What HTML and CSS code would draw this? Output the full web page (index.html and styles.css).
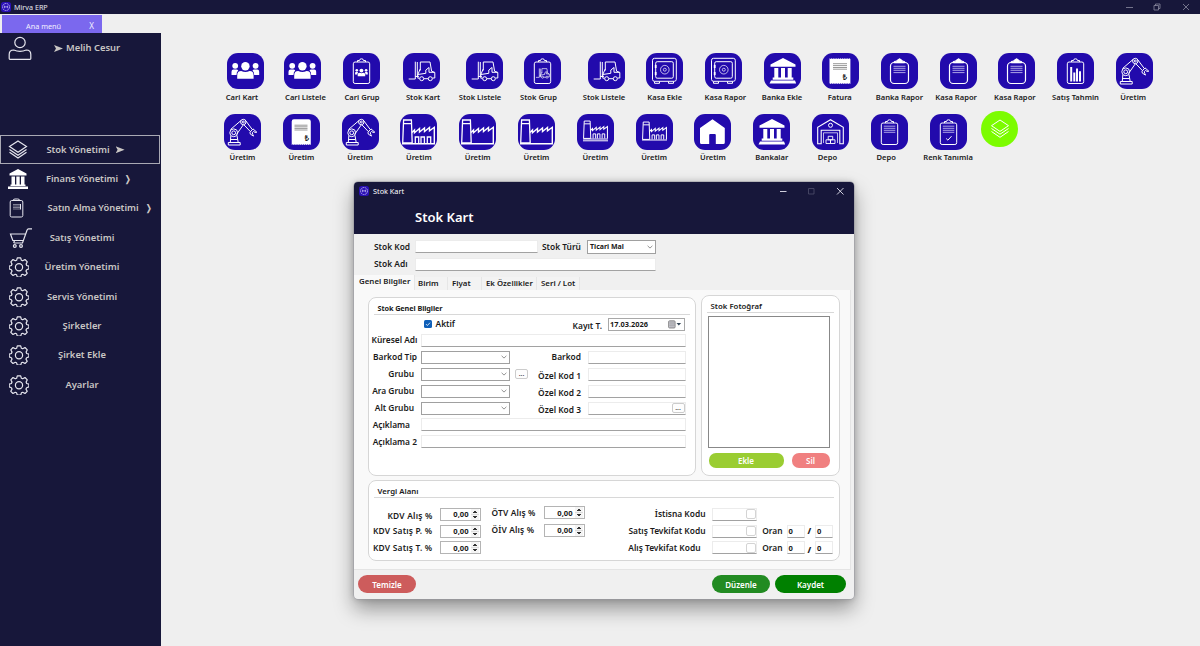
FILE: index.html
```html
<!DOCTYPE html>
<html lang="tr">
<head>
  <meta charset="utf-8">
  <title>Mirva ERP</title>
  <link rel="stylesheet" href="styles.css">
</head>
<body>
  <!-- icon library -->
  <svg class="symbols">
    <symbol id="logo" viewBox="0 0 10 10">
      <rect width="10" height="10" rx="2.5" fill="#2a10b4"/>
      <circle cx="5" cy="5" r="3.5" fill="none" stroke="#b9b0f0" stroke-width=".9" stroke-dasharray="1.8 .6"/>
      <path d="M3.4 6.2V4l1.6 1.3L6.6 4v2.2" fill="none" stroke="#d5d0f8" stroke-width=".7"/>
    </symbol>
    <symbol id="people" viewBox="0 0 37 36">
      <g fill="#fff" stroke="none">
        <circle cx="8.2" cy="12.8" r="2.9"/><circle cx="28.6" cy="12.8" r="2.9"/>
        <path d="M4.500 22v-3.300q0-2.200 2-2.200h3q1.200 0 1.700 1-1.700 1.300-1.700 4.500z"/>
        <path d="M32.200 22v-3.300q0-2.200-2-2.200h-3q-1.200 0-1.700 1 1.700 1.300 1.700 4.500z"/>
        <circle cx="18.400" cy="13.200" r="4.200"/>
        <path d="M10.200 25.700v-3.200q0-4.400 4-4.400 4.200 1.800 8.400 0 4 0 4 4.400v3.200z"/>
      </g>
    </symbol>
    <symbol id="board" viewBox="0 0 37 36">
      <rect x="10.300" y="9" width="16.400" height="21.500" rx="1.800"/>
      <path d="M14.500 9v-1.500h2q0-1.700 2-1.700t2 1.700h2V9"/>
    </symbol>
    <symbol id="board-people" viewBox="0 0 37 36">
      <use href="#board"/>
      <svg x="10" y="11.500" width="17" height="16.500"><use href="#people"/></svg>
    </symbol>
    <symbol id="forklift" viewBox="0 0 37 36">
      <path d="M5.700 26h6.600V8.700M14.300 9v14.500M12.300 23.500h3.500M17.300 17.500V9H27l1.600 9.200 3.200 1.300v5.500h-2.300M17.200 16l-2.400 5.500v3.700h1.700M21 25.700h4.200M14.800 21.500l8-1.200V17l3.200-2.500v4.800h5.500"/>
      <circle cx="18.700" cy="25.700" r="2"/><circle cx="27.300" cy="25.700" r="2"/>
    </symbol>
    <symbol id="board-forklift" viewBox="0 0 37 36">
      <use href="#board"/>
      <svg x="9" y="11" width="19" height="18.500" stroke-width="1.300"><use href="#forklift"/></svg>
    </symbol>
    <symbol id="safe" viewBox="0 0 37 36">
      <rect x="6.500" y="5.300" width="23.800" height="23" rx="2"/>
      <rect x="9.700" y="8.700" width="17.600" height="16.500" rx="1.500"/>
      <circle cx="18.800" cy="16.700" r="4.300" stroke-width=".7"/><circle cx="18.800" cy="16.700" r="1.500" stroke-width=".7"/>
      <path d="M9.700 12v3M9.700 19v3" stroke-width="1.800"/>
      <path d="M8.500 28.500v1.800h5v-1.800M22.500 28.500v1.800h5v-1.800"/>
    </symbol>
    <symbol id="bank" viewBox="0 0 37 36">
      <path fill="#fff" stroke="none" d="M19 5l12.500 6.500v2.200h-25v-2.200zM10.300 15h4v9.500h-4zM17 15h4v9.500h-4zM23.700 15h4v9.500h-4zM8.700 24.500h20.600v2.300H8.700zM7 27.600h24l1.200 3H5.500z"/>
    </symbol>
    <symbol id="invoice" viewBox="0 0 37 36">
      <path fill="#fff" stroke="none" d="M7.500 5.200l1.100.8 1.100-.8 1.100.8 1.100-.8 1.100.8 1.100-.8 1.100.8 1.100-.8 1.100.8 1.100-.8 1.100.8 1.100-.8 1.100.8 1.100-.8 1.100.8 1.100-.8 1.100.8 1.100-.8 1.100.8V31l-1.100-.8-1.100.8-1.100-.8-1.100.8-1.100-.8-1.100.8-1.100-.8-1.100.8-1.100-.8-1.100.8-1.100-.8-1.100.8-1.100-.8-1.100.8-1.100-.8-1.100.8-1.100-.8-1.100.8-1.100-.8z"/>
      <path d="M11 10.700h14M11 12.600h14M11 14.500h14M11 16.200h14" stroke="#8c8c8c" stroke-width=".9"/>
    </symbol>
    <symbol id="receipt" viewBox="0 0 37 36">
      <path fill="#fff" stroke="none" d="M8.700 7.500q0-2.200 2.200-2.200h14.700q2.200 0 2.200 2.200V31l-1.060-.8-1.060.8-1.060-.8-1.060.8-1.060-.8-1.060.8-1.060-.8-1.060.8-1.060-.8-1.060.8-1.060-.8-1.060.8-1.060-.8-1.060.8-1.060-.8-1.060.8-1.060-.8-1.060.8z"/>
      <path d="M11.500 11.200h13M11.500 12.800h13M11.500 14.400h13M11.500 16h13" stroke="#999" stroke-width="1"/>
    </symbol>
    <symbol id="report" viewBox="0 0 37 36">
      <rect x="9.500" y="9.500" width="18" height="21" rx="3.600" stroke-width="1.200"/>
      <path fill="#fff" d="M13.200 9.800V8.500q2.800 0 3.200-1.500 2.200-2.500 4.300 0 .4 1.500 3 1.500v1.300z"/>
      <path d="M12.500 13.300h12M12.500 15.300h12M12.500 17.300h12M12.500 19.600h12" stroke-width=".8" stroke="#cfc9f2"/>
    </symbol>
    <symbol id="chart" viewBox="0 0 37 36">
      <use href="#board"/>
      <path d="M14.200 28.500V14M17.300 28.500V19.500M20 28.500V15.500M23 28.500V18.300" stroke-width="2"/>
    </symbol>
    <symbol id="robot" viewBox="0 0 37 36">
      <path d="M4.300 31v-2.500h11.900V31zM6.300 28.500l.5-6.500M14.200 28.500L13 21.500M7 25.500h6.500M6.500 15.500L17 6.500M12.500 20.500l6.700-9.500M21.800 6.800l6.300 8.500M19.800 10.700l6.500 6.800M26 18.200l3-3.300 3.800 3.300-1.800.2-1.500-1-1.200 1.300.5 1.800.7 1.600-3.200-2z"/>
      <circle cx="9.700" cy="18.800" r="3.900"/><circle cx="9.700" cy="18.800" r="1.900"/>
      <circle cx="19.300" cy="8" r="2.700"/><circle cx="19.300" cy="8" r="1"/>
    </symbol>
    <symbol id="factory-plain" viewBox="0 0 37 36">
      <path d="M3.600 6h7.800l.8 23H2.700zM3.600 9.700h7.900" stroke-width="1.300"/>
      <path d="M12 18.500l2.500-2.500v2.700l5-4.200v3.500l5-4v3.500l5-4v3.300l4.800-3.500V29" stroke-width="1.400"/>
      <path d="M2 29.800h33" stroke-width="1.600"/>
    </symbol>
    <symbol id="factory" viewBox="0 0 37 36">
      <use href="#factory-plain"/>
      <path d="M15.300 29v-6h3.400v6M21 29v-6h3.400v6M27.300 29v-6h3.400v6" stroke-width="1.300"/>
    </symbol>
    <symbol id="factory-small" viewBox="0 0 37 36">
      <svg x="4.500" y="2.500" width="28" height="27.200"><use href="#factory"/></svg>
      <path d="M6 26.800h25" stroke-width="1"/>
    </symbol>
    <symbol id="factory-mini" viewBox="0 0 37 36">
      <svg x="4.500" y="3.500" width="28" height="27.200"><use href="#factory"/></svg>
    </symbol>
    <symbol id="house" viewBox="0 0 37 36">
      <path fill="#fff" stroke="none" d="M18.500 5.300L30.800 14v14.500q0 1.500-1.500 1.500h-7.500v-9q0-1-1-1h-4.600q-1 0-1 1v9H7.500Q6 30 6 28.500V14z"/>
    </symbol>
    <symbol id="depot" viewBox="0 0 37 36">
      <path d="M5.700 29.700V13.200l12.800-7.500 12.800 7.500v16.500h-3.500V16.200H9.200v13.500z" stroke-width="1.100"/>
      <path d="M11.500 29V18.800h14V29" stroke-width=".7"/>
      <circle cx="18.500" cy="11.300" r="2"/>
      <path d="M14 29.500v-3.700h4.500v3.700zM18.500 29.500v-3.700H23v3.700zM16.200 25.800v-3.500h4.500v3.500z" stroke-width=".9"/>
    </symbol>
    <symbol id="list" viewBox="0 0 37 36">
      <use href="#board"/>
      <path d="M12.800 12.200h11.500M12.800 14.300h11.500M12.800 16.300h11.500M12.800 18.300h11.500" stroke-width=".8" stroke="#cfc9f2"/>
    </symbol>
    <symbol id="list-check" viewBox="0 0 37 36">
      <use href="#list"/>
      <path d="M16.200 24.500l1.700 1.700 3.600-4"/>
    </symbol>
    <symbol id="layers" viewBox="0 0 37 36">
      <path d="M19 9l8.500 5.700-8.500 5.700-8.500-5.700zM10.500 17.500l8.500 5.700 8.500-5.700M10.500 20.500l8.500 5.800 8.500-5.800"/>
    </symbol>
    <symbol id="gear" viewBox="0 0 20 20">
      <path d="M8.300.8h3.400l.7 2.500 1.300.5 2.300-1.300 2.300 2.300-1.200 2.300.6 1.400 2.200.6v2.800l-2.300.8-.6 1.400 1.200 2.200-2.200 2.200-2.300-1.200-1.300.5-.7 2.400H8.300l-.7-2.400-1.300-.5L4 18.500 1.800 16.300 3 14.100l-.6-1.400L.2 11.900V9.100l2.200-.6L3 7.100 1.800 4.800 4 2.500l2.300 1.300 1.300-.5z" stroke-linejoin="round"/>
      <circle cx="10" cy="10.300" r="3.600"/>
    </symbol>
    <symbol id="chev" viewBox="0 0 6 4">
      <path d="M.6.800L3 3.100 5.400.8" fill="none" stroke="#777" stroke-width=".8"/>
    </symbol>
  </svg>

  <header class="titlebar">
    <svg class="logo"><use href="#logo"/></svg>
    <span>Mirva ERP</span>
    <svg class="winbtns" viewBox="0 0 70 12">
      <path d="M3 6.500h7M31 4.500h4.500v4.500H31zM32.500 4.500V3h4.500v4.500h-1.500M60 3l6 6M66 3l-6 6"/>
    </svg>
  </header>

  <div class="tabstrip">
    <div class="tab"><span>Ana menü</span><b>X</b></div>
  </div>

  <div class="workspace">
    <nav class="sidebar">
      <div class="user">
        <svg viewBox="0 0 24 24"><circle cx="12" cy="6.500" r="5.200"/><path d="M1.200 22.500v-4q0-4.500 4.500-4.500 6.300 2.600 12.600 0 4.500 0 4.500 4.500v4q0 .8-.8.800H2q-.8 0-.8-.800z"/></svg>
        <span class="arrow"></span><span>Melih Cesur</span>
      </div>
      <a class="item active"><svg viewBox="0 0 20 20"><path d="M10 1l8.500 5.500L10 12.300 1.500 6.500zM1.500 9.500l8.500 5.700 8.500-5.700M1.500 12.300l8.500 5.700 8.500-5.700"/></svg><span>Stok Yönetimi</span><i class="arrow"></i></a>
      <a class="item fin"><svg class="solid" viewBox="0 0 20 20"><path d="M10 0l8.500 4.500v2H1.500v-2zM3.500 7.500H7v8H3.500zM8.300 7.500h3.400v8H8.300zM13 7.500h3.500v8H13zM2.500 15.500h15v1.500h-15zM0 17.500h20V20H0z"/></svg><span>Finans Yönetimi</span><i class="mark">❭</i></a>
      <a class="item wide"><svg class="thin" viewBox="0 0 20 20"><rect x="1.200" y="2.500" width="12.600" height="16.500" rx="1.500"/><path d="M4 2.500q.2-1.500 2-1.500h2.800q1.800 0 2 1.500"/><path d="M4 6.500h7M4 8h7M4 9.500h7M4 11h7" stroke-width=".5"/><path d="M11.500 6v5.500"/></svg><span>Satın Alma Yönetimi</span><i class="mark">❭</i></a>
      <a class="item"><svg class="cart" viewBox="0 0 24 20"><path d="M23 .9h-3.500q-1 0-1.500 1.300L13.500 15H4.700M17 6H1.500l2.300 6.500h10.500M5.500 12.500L4.700 15"/><circle cx="5.800" cy="18" r="1.400"/><circle cx="12" cy="18" r="1.400"/></svg><span>Satış Yönetimi</span></a>
      <a class="item"><svg><use href="#gear"/></svg><span>Üretim Yönetimi</span></a>
      <a class="item"><svg><use href="#gear"/></svg><span>Servis Yönetimi</span></a>
      <a class="item"><svg><use href="#gear"/></svg><span>Şirketler</span></a>
      <a class="item"><svg><use href="#gear"/></svg><span>Şirket Ekle</span></a>
      <a class="item"><svg><use href="#gear"/></svg><span>Ayarlar</span></a>
    </nav>

    <main class="launcher">
      <div class="tiles first">
        <a class="tile l3"><svg><use href="#people"/></svg><span>Cari Kart</span></a>
        <a class="tile r3"><svg><use href="#people"/></svg><span>Cari Listele</span></a>
        <a class="tile r1"><svg><use href="#board-people"/></svg><span>Cari Grup</span></a>
        <a class="tile r2"><svg><use href="#forklift"/></svg><span>Stok Kart</span></a>
        <a class="tile l4"><svg><use href="#forklift"/></svg><span>Stok Listele</span></a>
        <a class="tile l4"><svg><use href="#board-forklift"/></svg><span>Stok Grup</span></a>
        <a class="tile l2"><svg><use href="#forklift"/></svg><span>Stok Listele</span></a>
        <a class="tile"><svg><use href="#safe"/></svg><span>Kasa Ekle</span></a>
        <a class="tile r2"><svg><use href="#safe"/></svg><span>Kasa Rapor</span></a>
        <a class="tile"><svg><use href="#bank"/></svg><span>Banka Ekle</span></a>
        <a class="tile l1"><svg viewBox="0 0 37 36"><use href="#invoice"/><text x="20.500" y="26.500">₺</text></svg><span>Fatura</span></a>
        <a class="tile"><svg><use href="#report"/></svg><span>Banka Rapor</span></a>
        <a class="tile l2"><svg><use href="#report"/></svg><span>Kasa Rapor</span></a>
        <a class="tile l2"><svg><use href="#report"/></svg><span>Kasa Rapor</span></a>
        <a class="tile"><svg><use href="#chart"/></svg><span>Satış Tahmin</span></a>
        <a class="tile l1"><svg><use href="#robot"/></svg><span>Üretim</span></a>
      </div>
      <div class="tiles second">
        <a class="tile"><svg><use href="#robot"/></svg><span>Üretim</span></a>
        <a class="tile"><svg viewBox="0 0 37 36"><use href="#receipt"/><text x="21.500" y="26.500">₺</text></svg><span>Üretim</span></a>
        <a class="tile"><svg><use href="#robot"/></svg><span>Üretim</span></a>
        <a class="tile"><svg><use href="#factory"/></svg><span>Üretim</span></a>
        <a class="tile"><svg><use href="#factory-plain"/></svg><span>Üretim</span></a>
        <a class="tile"><svg><use href="#factory-plain"/></svg><span>Üretim</span></a>
        <a class="tile"><svg><use href="#factory-small"/></svg><span>Üretim</span></a>
        <a class="tile"><svg><use href="#factory-mini"/></svg><span>Üretim</span></a>
        <a class="tile"><svg><use href="#house"/></svg><span>Üretim</span></a>
        <a class="tile"><svg><use href="#bank"/></svg><span>Bankalar</span></a>
        <a class="tile l3"><svg><use href="#depot"/></svg><span>Depo</span></a>
        <a class="tile l3"><svg><use href="#list"/></svg><span>Depo</span></a>
        <a class="tile"><svg><use href="#list-check"/></svg><span>Renk Tanımla</span></a>
        <a class="tile round"><svg><use href="#layers"/></svg></a>
      </div>
    </main>
  </div>

  <section class="window">
    <header class="window-head">
      <div class="window-title">
        <svg class="logo"><use href="#logo"/></svg><span>Stok Kart</span>
        <svg class="controls" viewBox="0 0 70 12"><path d="M3 6.500h6.500M60 3l6.500 6.500M66.500 3L60 9.500"/><path class="off" d="M31.500 3.500h5.500V9h-5.500z"/></svg>
      </div>
      <h1>Stok Kart</h1>
    </header>

    <div class="keys">
      <label>Stok Kod</label><span class="field"></span><label class="kind">Stok Türü</label><span class="select">Ticari Mal<svg><use href="#chev"/></svg></span>
      <label class="name">Stok Adı</label><span class="field span3"></span>
    </div>

    <div class="tabs">
      <span class="on">Genel Bilgiler</span><span class="t-birim">Birim</span><span class="t-fiyat">Fiyat</span><span class="t-ek">Ek Özellikler</span><span class="t-seri">Seri / Lot</span>
    </div>

    <div class="page">
      <div class="upper">
        <fieldset class="general">
          <h2>Stok Genel Bilgiler</h2>
          <div class="top-row">
            <span class="check"><svg viewBox="0 0 8 8"><path d="M2 4.100l1.400 1.400L6 2.700"/></svg></span><label>Aktif</label>
            <label class="date-label">Kayıt T.</label>
            <span class="date">17.03.2026<svg viewBox="0 0 14 9"><rect x=".6" y=".8" width="6.500" height="7.200" rx="1" fill="#c9c9d2" stroke="#777" stroke-width=".8"/><path d="M1 3h6M1 5.200h6M3 1v7M5 1v7" stroke="#888" stroke-width=".4"/><path d="M8.500 3h4.600l-2.300 2.600z" fill="#345"/></svg></span>
          </div>
          <div class="rows">
            <label class="c">Küresel Adı</label><span class="field full"></span>
            <label class="c">Barkod Tip</label><span class="select"><svg><use href="#chev"/></svg></span><span></span><label>Barkod</label><span class="field"></span>
            <label>Grubu</label><span class="select"><svg><use href="#chev"/></svg></span><button class="dots">...</button><label class="low">Özel Kod 1</label><span class="field"></span>
            <label>Ara Grubu</label><span class="select"><svg><use href="#chev"/></svg></span><span></span><label class="low">Özel Kod 2</label><span class="field"></span>
            <label>Alt Grubu</label><span class="select"><svg><use href="#chev"/></svg></span><span></span><label class="low">Özel Kod 3</label><span class="field"><button class="dots">...</button></span>
            <label class="a1">Açıklama</label><span class="field full"></span>
            <label class="c">Açıklama 2</label><span class="field full"></span>
          </div>
        </fieldset>

        <fieldset class="photo">
          <h2>Stok Fotoğraf</h2>
          <div class="frame"></div>
          <div class="photo-btns">
            <button class="add">Ekle</button><button class="del">Sil</button>
          </div>
        </fieldset>
      </div>

      <fieldset class="tax">
        <h2>Vergi Alanı</h2>
        <div class="tax-body">
          <div class="vat">
            <label class="first">KDV Alış %</label><span class="num">0,00</span>
            <label>KDV Satış P. %</label><span class="num">0,00</span>
            <label>KDV Satış T. %</label><span class="num">0,00</span>
          </div>
          <div class="otv">
            <label>ÖTV Alış %</label><span class="num">0,00</span>
            <label>ÖİV Alış %</label><span class="num">0,00</span>
          </div>
          <div class="codes">
            <label>İstisna Kodu</label><span class="field"><i class="pick"></i></span><span></span><span></span><span></span><span></span>
            <label>Satış Tevkifat Kodu</label><span class="field"><i class="pick"></i></span><label class="rate">Oran</label><span class="field">0</span><b>/</b><span class="field">0</span>
            <label class="last">Alış Tevkifat Kodu</label><span class="field"><i class="pick"></i></span><label class="rate">Oran</label><span class="field">0</span><b class="low">/</b><span class="field">0</span>
          </div>
        </div>
      </fieldset>
    </div>

    <footer class="actions">
      <button class="clear">Temizle</button>
      <button class="edit">Düzenle</button>
      <button class="save">Kaydet</button>
    </footer>
  </section>
</body>
</html>
```
FILE: styles.css
```css
* {
  box-sizing: border-box;
}

body {
  margin: 0;
  width: 1200px;
  height: 646px;
  overflow: hidden;
  display: flex;
  flex-direction: column;
  background-color: #efefef;
  font-family: "Noto Sans", "Open Sans", sans-serif;
  font-size: 8px;
  line-height: 10px;
  color: #1a1a1a;
}

.symbols {
  width: 0;
  height: 0;
}

svg {
  display: block;
  flex: none;
}

button {
  font-family: inherit;
  padding: 0;
  border: none;
}

/* main window */
.titlebar {
  height: 14px;
  flex: none;
  display: flex;
  align-items: center;
  padding-left: 1px;
  background-color: #17173a;
  color: #e8e8ee;
  font-size: 7.2px;
}

.logo {
  width: 10px;
  height: 10px;
  margin-right: 4px;
}

.titlebar .logo {
  margin-right: 3px;
}

.winbtns {
  width: 70px;
  height: 12px;
  margin-left: auto;
  margin-right: 7px;
  fill: none;
  stroke: #8c8ca0;
  stroke-width: .8;
}

.tabstrip {
  height: 19px;
  flex: none;
  padding: 1px 0 0 2px;
}

.tab {
  width: 100px;
  height: 18px;
  display: flex;
  align-items: center;
  padding: 3px 8px 0 24px;
  background-color: #7b68ee;
  color: #f2f0ff;
  font-size: 7.3px;
}

.tab b {
  margin-left: auto;
  font-size: 8px;
  font-weight: normal;
}

.workspace {
  flex: 1;
  display: flex;
}

/* sidebar */
.sidebar {
  width: 161px;
  flex: none;
  background-color: #17173a;
  color: #c9c6c4;
  font-size: 9.4px;
  font-weight: 600;
}

.sidebar svg {
  fill: none;
  stroke: #e6e6ee;
  stroke-width: 1.2;
}

.user {
  height: 102px;
  display: flex;
  align-items: flex-start;
  padding: 3px 0 0 8px;
}

.user svg {
  width: 24px;
  height: 24px;
}

.user span {
  margin-top: 7px;
}

.arrow {
  width: 9px;
  height: 7px;
  background-color: #c9c6c4;
  clip-path: polygon(0 0, 100% 50%, 0 100%, 22% 50%);
}

.user .arrow {
  margin: 9px 3px 0 22px;
}

.item {
  position: relative;
  height: 29.4px;
  display: flex;
  align-items: center;
  justify-content: center;
  margin-left: 3px;
}

.item svg {
  position: absolute;
  left: 6px;
  width: 20px;
  height: 20px;
}

.item .cart {
  width: 24px;
}

.item .thin {
  stroke-width: 1;
}

.item .solid {
  left: 5px;
  fill: #fff;
  stroke: none;
}

.item .arrow,
.item .mark {
  margin-left: 6px;
  font-style: normal;
}

.item .mark {
  width: 6px;
}

.item.active {
  width: 160px;
  margin-left: 0;
  padding-left: 11px;
  border: 1px solid #a9a9b4;
}

.item.active svg {
  left: 7px;
}

.item.fin {
  padding-left: 12px;
  font-size: 9.3px;
}

.item.wide {
  padding-left: 34px;
  font-size: 9.3px;
}

/* launcher */
.launcher {
  flex: 1;
  padding-top: 20px;
}

.tiles {
  display: grid;
}

.tiles.first {
  padding-left: 65.5px;
  height: 60.5px;
  grid-template-columns: 57.5px 58.5px 60px 63px 58.5px 63.5px repeat(9, 58.7px) 38px;
}

.tiles.second {
  padding-left: 63px;
  grid-template-columns: repeat(12, 58.8px) 51.5px 38px;
}

.tile {
  width: 37px;
  display: flex;
  flex-direction: column;
  align-items: center;
  font-size: 7.6px;
  font-weight: 600;
  white-space: nowrap;
}

.tile svg {
  fill: none;
  stroke: #fff;
  stroke-width: 1;
}

.tile text {
  font-size: 8px;
  fill: #222;
  stroke: none;
}

.tile > svg {
  width: 37px;
  height: 36px;
  margin-bottom: 3px;
  border-radius: 11px;
  background-color: #220aac;
}

.second .tile > svg {
  margin-bottom: 2.4px;
}

.tile.round > svg {
  border-radius: 18px;
  background-color: #7cfc00;
  margin-top: -2.5px;
}

.l1 span { margin-left: -2px; }
.l2 span { margin-left: -4px; }
.l3 span { margin-left: -6px; }
.l4 span { margin-left: -8px; }
.r1 span { margin-left: 2px; }
.r2 span { margin-left: 4px; }
.r3 span { margin-left: 6px; }

/* stock card window */
.window {
  position: absolute;
  left: 354px;
  top: 182px;
  width: 500px;
  height: 416.5px;
  display: flex;
  flex-direction: column;
  border-radius: 4px;
  overflow: hidden;
  background-color: #f0f0f0;
  box-shadow: 0 0 0 .5px #9a9aa2, 0 10px 20px rgba(0, 0, 0, .38), 0 0 6px rgba(0, 0, 0, .2);
  font-size: 8.4px;
  font-weight: 600;
}

.window-head {
  height: 52px;
  flex: none;
  background-color: #17173a;
  color: #fff;
}

.window-title {
  display: flex;
  align-items: center;
  height: 18px;
  padding-left: 5px;
  font-size: 7.3px;
  font-weight: normal;
}

.controls {
  width: 70px;
  height: 12px;
  margin-left: auto;
  margin-right: 7.5px;
  fill: none;
  stroke: #e4e4ee;
  stroke-width: .9;
}

.controls .off {
  stroke: #4a4a66;
}

.window h1 {
  margin: 8px 0 0 61px;
  font-size: 13px;
  line-height: 18px;
  font-weight: 600;
}

.field {
  display: flex;
  height: 13px;
  align-items: center;
  background-color: #fff;
  border: 1px solid #ececec;
  border-bottom-color: #a2a2a2;
}

.select {
  display: flex;
  align-items: center;
  height: 13px;
  padding: 0 2px;
  background-color: #fff;
  border: 1px solid #a0a0a0;
  font-size: 7px;
  font-weight: bold;
}

.select svg {
  width: 6px;
  height: 4px;
  margin-left: auto;
}

.keys {
  display: grid;
  grid-template-columns: 56px 123px 49px 69px;
  grid-auto-rows: 17.5px;
  align-items: center;
  padding: 4px 0 0 5px;
  height: 42px;
  flex: none;
}

.keys label {
  padding-left: 15px;
}

.keys .kind {
  padding-left: 4px;
}

.keys .select {
  height: 14px;
  margin-top: 1px;
}

.keys .span3 {
  grid-column: span 3;
}

.tabs {
  height: 14px;
  flex: none;
  display: flex;
  align-items: flex-end;
  font-size: 7.9px;
  line-height: 12px;
}

.tabs span {
  height: 13px;
  padding-left: 3px;
  border-right: 1px solid #e6e6e6;
  background-color: #f3f3f3;
  white-space: nowrap;
}

.tabs .on {
  width: 61px;
  height: 15px;
  padding-left: 5px;
  background-color: #f9f9f9;
}

.tabs .t-birim { width: 33px; }
.tabs .t-fiyat { width: 34px; padding-left: 4px; }
.tabs .t-ek { width: 55px; padding-left: 4px; font-size: 7.8px; }
.tabs .t-seri { width: 43px; padding-left: 4px; }

.page {
  height: 280px;
  flex: none;
  margin-right: 3px;
  padding: 5px 10px 0 13.5px;
  background-color: #f9f9f9;
  border-right: 1px solid #e4e4e4;
  border-bottom: 1px solid #e4e4e4;
}

.upper {
  display: flex;
  justify-content: space-between;
  align-items: flex-end;
  height: 181px;
  margin-bottom: 4px;
}

fieldset {
  margin: 0;
  padding: 0 9px 0 3px;
  min-width: 0;
  border: 1px solid #d6d6d6;
  border-radius: 8px;
  background-color: #fff;
}

h2 {
  margin: 0 -4px 0 2px;
  padding-left: 4px;
  font-size: 7.8px;
  line-height: 12px;
  font-weight: 600;
  border-bottom: 1px solid #d8d8d8;
}

.general {
  width: 328.5px;
  height: 179px;
  padding-top: 4px;
}

.general h2 {
  font-size: 7.3px;
  font-weight: bold;
  letter-spacing: -.1px;
}

.top-row {
  display: flex;
  align-items: center;
  height: 17px;
  padding: 1px 0 0 52px;
}

.check {
  width: 8px;
  height: 8px;
  margin-right: 4px;
  border-radius: 1.5px;
  background-color: #0f5fb8;
}

.check svg {
  fill: none;
  stroke: #fff;
  stroke-width: .8;
}

.date-label {
  margin: 3px 6px 0 auto;
}

.date {
  width: 77px;
  height: 13px;
  margin-right: 1px;
  display: flex;
  align-items: center;
  justify-content: space-between;
  padding: 0 2px 0 1px;
  border: 1px solid #a8a8a8;
  font-size: 7.4px;
  font-weight: bold;
}

.date svg {
  width: 14px;
  height: 9px;
}

.rows {
  display: grid;
  grid-template-columns: 49.5px 89px 23px 55px 97.5px;
  grid-auto-rows: 16.9px;
  align-items: center;
  margin-right: -3px;
}

.rows label {
  padding-right: 7px;
  text-align: right;
  white-space: nowrap;
}

.rows .c {
  padding-right: 4px;
}

.rows .a1 {
  padding-right: 11px;
}

.rows .low {
  padding-top: 3px;
}

.rows .full {
  grid-column: span 4;
}

.dots {
  width: 13px;
  height: 10px;
  margin-left: 5px;
  border: 1px solid #ccc;
  border-radius: 2px;
  background-color: #fdfdfd;
  font-size: 7px;
  line-height: 6px;
  color: #333;
}

.rows .field .dots {
  margin-left: auto;
}

.photo {
  width: 139.5px;
  height: 181px;
  padding-top: 4px;
  padding-left: 6px;
}

.photo h2 {
  margin: 0 -4px 0 -1px;
}

.frame {
  width: 122px;
  height: 132px;
  margin-top: 3px;
  border: 1px solid #888;
}

.photo-btns {
  display: flex;
  justify-content: space-between;
  width: 121px;
  margin: 5px 0 0 1px;
}

.photo-btns button {
  height: 14.5px;
  border-radius: 7px;
  color: #fff;
  font-size: 8px;
  font-weight: 600;
}

.add {
  width: 75px;
  background-color: #9acd32;
}

.del {
  width: 38px;
  background-color: #f08080;
}

.tax {
  height: 81px;
  padding-top: 4px;
}

.tax-body {
  display: flex;
  align-items: flex-start;
}

.tax label {
  white-space: nowrap;
}

.vat {
  display: grid;
  grid-template-columns: 68px 41px;
  grid-auto-rows: 16.8px;
  align-items: center;
  padding: 8px 0 0 0;
}

.vat label {
  padding-left: 1.5px;
  letter-spacing: .2px;
}

.vat .first {
  padding: 3px 0 0 16px;
}

.num {
  width: 41px;
  height: 13px;
  display: flex;
  align-items: center;
  justify-content: flex-end;
  padding-right: 1px;
  border: 1px solid #b4b4b4;
  font-size: 7.6px;
  font-weight: bold;
}

/* spin buttons */
.num::after {
  content: "";
  width: 8px;
  height: 11px;
  margin-left: 2px;
  background:
    linear-gradient(#333, #333) 3px 2px / 2px 1px no-repeat,
    linear-gradient(#333, #333) 2px 3px / 4px 1px no-repeat,
    linear-gradient(#333, #333) 2px 7px / 4px 1px no-repeat,
    linear-gradient(#333, #333) 3px 8px / 2px 1px no-repeat,
    linear-gradient(#ddd, #ddd) 0 5px / 8px 1px no-repeat,
    #f4f4f4;
}

.otv {
  display: grid;
  grid-template-columns: 52px 41px;
  grid-auto-rows: 17.5px;
  align-items: center;
  padding: 6px 0 0 11px;
}

.otv label {
  letter-spacing: .15px;
}

.codes {
  display: grid;
  grid-template-columns: 85px 45px 30px 18px 10.5px 18px;
  grid-auto-rows: 16.8px;
  align-items: center;
  margin-left: 42px;
  padding-top: 8px;
}

.codes label {
  padding-right: 6px;
  text-align: right;
}

.codes .last {
  padding-right: 11px;
}

.codes .rate {
  padding-right: 4px;
}

.codes .field {
  padding-left: 1px;
  font-size: 7.6px;
  font-weight: bold;
}

.codes b {
  padding-left: 3px;
}

.codes b.low {
  padding-top: 4px;
}

.pick {
  width: 10px;
  height: 10px;
  margin-left: auto;
  border: 1px solid #d4d4d4;
  border-radius: 2px;
}

.actions {
  flex: 1;
  display: flex;
  align-items: center;
  padding: 0 8px 0 4px;
}

.actions button {
  height: 18px;
  border-radius: 9px;
  color: #fff;
  font-size: 8px;
  font-weight: 600;
}

.clear {
  width: 58px;
  margin-right: auto;
  background-color: #cd5c5c;
}

.edit {
  width: 58px;
  margin-right: 5px;
  background-color: #228b22;
}

.save {
  width: 71px;
  background-color: #008000;
}
```
